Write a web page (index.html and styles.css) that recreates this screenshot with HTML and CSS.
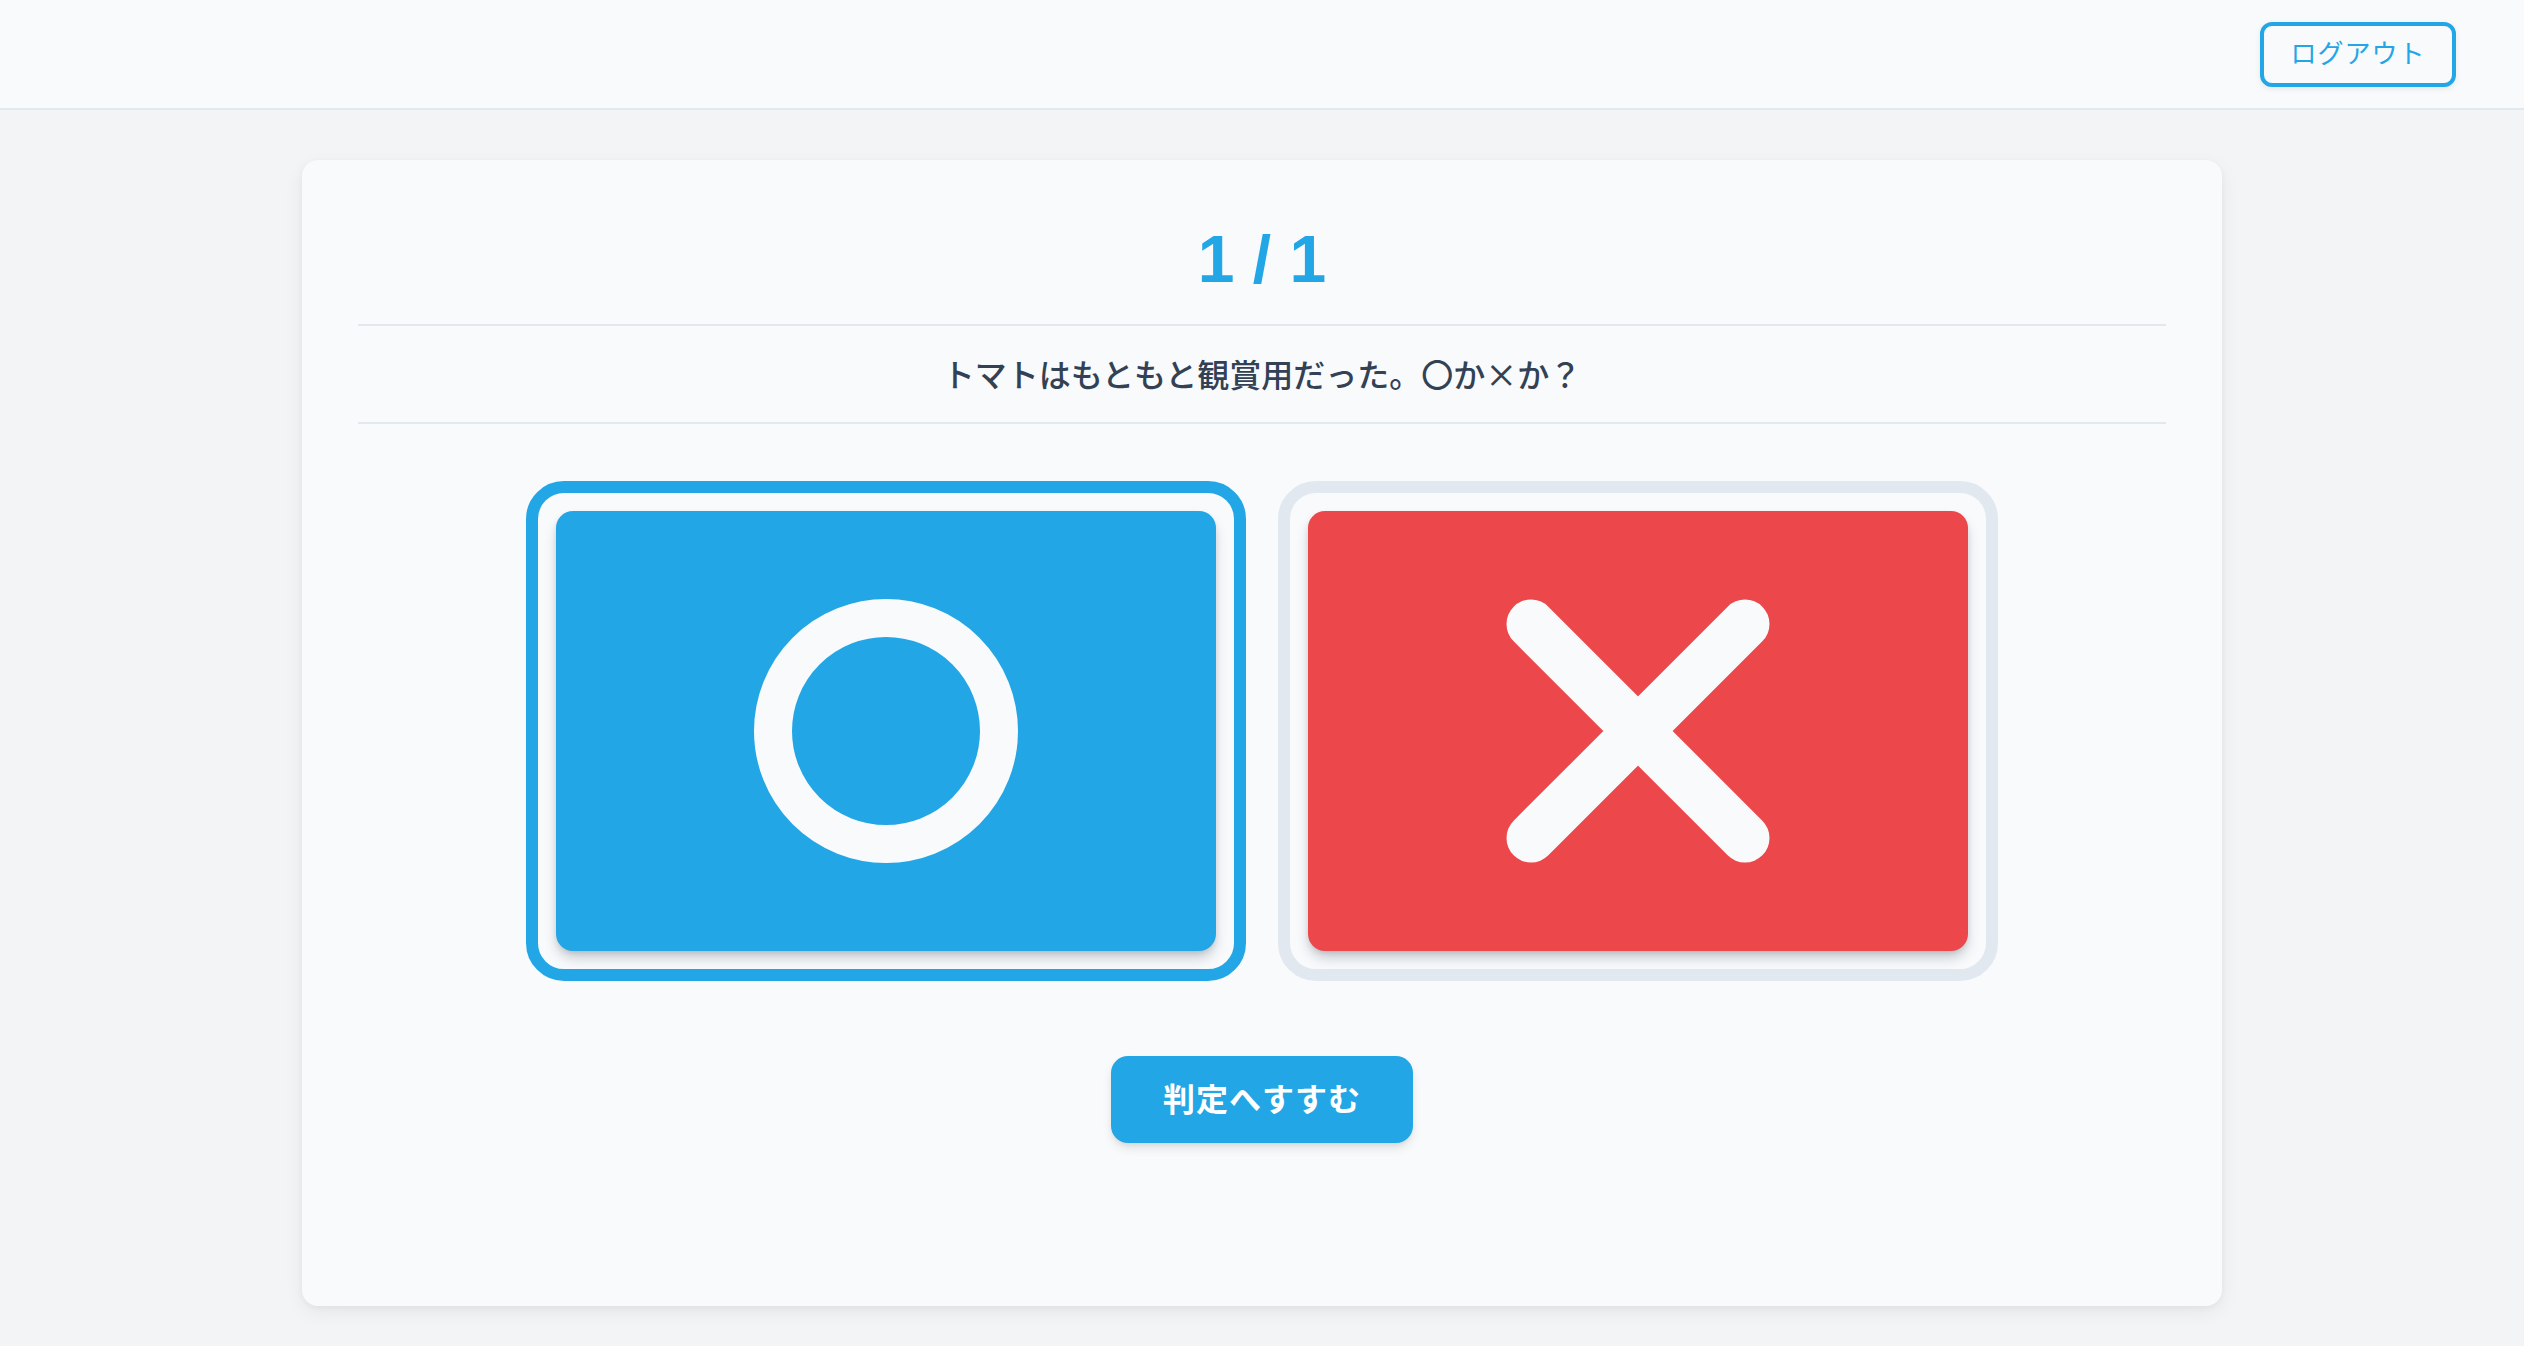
FILE: index.html
```html
<!DOCTYPE html>
<html lang="ja">
<head>
<meta charset="utf-8">
<title>クイズ</title>
<link rel="stylesheet" href="styles.css">
</head>
<body>
<header class="topbar">
  <button class="logout" type="button">ログアウト</button>
</header>
<main class="main">
  <section class="card">
    <h1 class="counter">1 / 1</h1>
    <p class="question">トマトはもともと観賞用だった。〇か×か？</p>
    <div class="choices">
      <div class="choice choice-selected">
        <button class="choice-btn choice-maru" type="button" aria-label="〇">
          <svg class="mark" width="264" height="264" viewBox="0 0 264 264">
            <circle cx="132" cy="132" r="113" fill="none" stroke="#f8fafc" stroke-width="38"/>
          </svg>
        </button>
      </div>
      <div class="choice">
        <button class="choice-btn choice-batsu" type="button" aria-label="×">
          <svg class="mark" width="264" height="264" viewBox="0 0 264 264">
            <path d="M25 25 L239 239 M239 25 L25 239" fill="none" stroke="#f8fafc" stroke-width="49" stroke-linecap="round"/>
          </svg>
        </button>
      </div>
    </div>
    <div class="actions">
      <button class="next" type="button">判定へすすむ</button>
    </div>
  </section>
</main>
</body>
</html>
```

FILE: styles.css
```css
* {
  box-sizing: border-box;
}

html, body {
  margin: 0;
  padding: 0;
}

body {
  background: #f3f4f6;
  font-family: "Liberation Sans", "Noto Sans CJK JP", sans-serif;
  color: #334155;
  min-height: 1346px;
}

button {
  font-family: inherit;
  cursor: pointer;
}

.topbar {
  height: 110px;
  background: #f8fafc;
  border-bottom: 2px solid #e2e8f0;
  display: flex;
  align-items: center;
  justify-content: flex-end;
  padding: 0 68px 0 0;
}

.logout {
  height: 65px;
  width: 196px;
  padding: 0 0 5px;
  border: 4px solid #23a6e6;
  border-radius: 12px;
  background: #f8fafc;
  color: #23a6e6;
  font-family: "Noto Sans CJK JP", sans-serif;
  font-size: 26px;
  font-weight: 400;
  letter-spacing: 1px;
  box-shadow: 0 2px 6px rgba(0, 0, 0, 0.08);
}

.main {
  padding-top: 50px;
}

.card {
  width: 1920px;
  margin: 0 auto;
  background: #f8fafc;
  border-radius: 16px;
  box-shadow: 0 6px 20px rgba(0, 0, 0, 0.06), 0 2px 6px rgba(0, 0, 0, 0.04);
  padding: 59px 56px 163px;
}

.counter {
  margin: 0;
  text-align: center;
  font-size: 66px;
  line-height: 80px;
  font-weight: 700;
  color: #23a6e6;
}

.question {
  margin: 25px 0 0;
  border-top: 2px solid #e2e8f0;
  border-bottom: 2px solid #e2e8f0;
  padding: 23px 0 25px;
  line-height: 48px;
  font-size: 32px;
  font-weight: 500;
  text-align: center;
  color: #334155;
  font-family: "Noto Sans CJK JP", sans-serif;
}

.choices {
  margin-top: 57px;
  display: flex;
  justify-content: center;
  gap: 32px;
}

.choice {
  width: 720px;
  height: 500px;
  border: 12px solid #e2e8f0;
  border-radius: 38px;
  padding: 18px;
  background: #f8fafc;
}

.choice-selected {
  border-color: #23a6e6;
}

.choice-btn {
  width: 100%;
  height: 100%;
  border: none;
  border-radius: 17px;
  padding: 0;
  display: flex;
  align-items: center;
  justify-content: center;
  box-shadow: 0 8px 14px -2px rgba(15, 23, 42, 0.22), 0 3px 6px -2px rgba(15, 23, 42, 0.15);
}

.choice-maru {
  background: #23a6e6;
}

.choice-batsu {
  background: #ec474a;
}

.mark {
  display: block;
}

.actions {
  margin-top: 75px;
  display: flex;
  justify-content: center;
}

.next {
  width: 302px;
  height: 87px;
  border: none;
  border-radius: 17px;
  padding: 0 0 5px;
  background: #23a6e6;
  color: #ffffff;
  font-family: "Noto Sans CJK JP", sans-serif;
  font-size: 32px;
  font-weight: 700;
  letter-spacing: 1px;
  box-shadow: 0 6px 12px -2px rgba(0, 0, 0, 0.12), 0 3px 6px -3px rgba(0, 0, 0, 0.1);
}
```
